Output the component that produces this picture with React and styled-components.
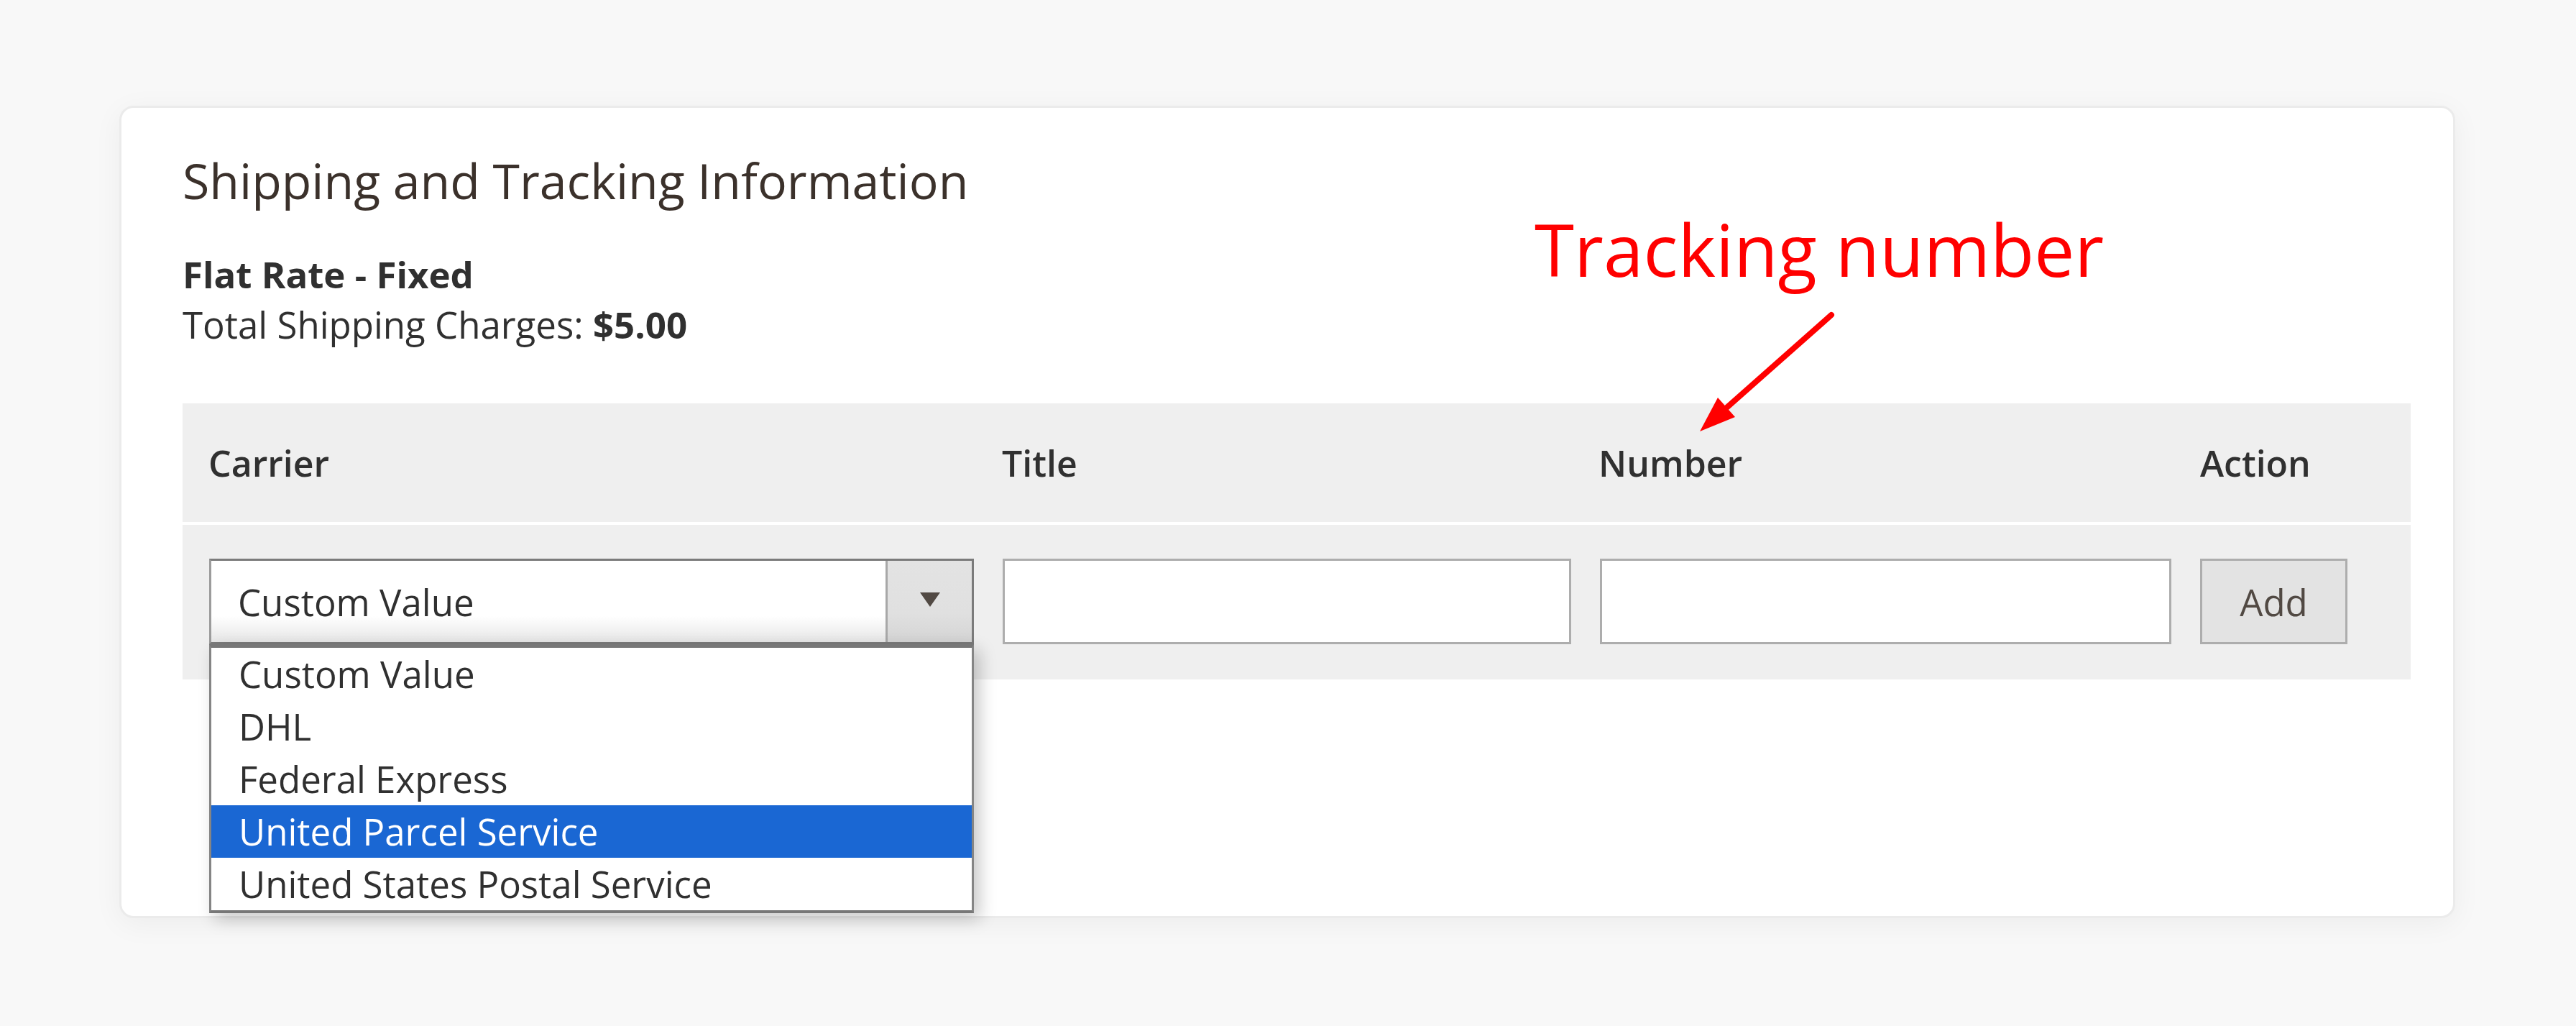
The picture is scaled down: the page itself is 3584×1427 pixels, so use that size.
import React from 'react'
import styled, { createGlobalStyle } from 'styled-components'

const GlobalStyle = createGlobalStyle`
  html, body {
    margin: 0;
    background: #f8f8f8;
    font-family: "Open Sans", "Liberation Sans", sans-serif;
  }
`

const Page = styled.div`
  box-sizing: border-box;
  min-height: 100vh;
  padding: 147px 168px 0 166px;
`

const Card = styled.section`
  position: relative;
  background: #fff;
  border: 3px solid #ebebeb;
  border-radius: 20px;
  box-shadow: 0 8px 40px rgba(0, 0, 0, 0.05);
  padding: 60px 59px 329px 85px;
`

const Title = styled.h2`
  margin: 0 0 54px;
  font-size: 68px;
  line-height: 82px;
  font-weight: 400;
  color: #3b312b;
`

const Info = styled.div`
  font-size: 51px;
  line-height: 70px;
  color: #303030;

  strong {
    font-weight: 700;
  }
`

const Table = styled.div`
  margin-top: 75px;
`

const Row = styled.div`
  display: grid;
  grid-template-columns: 1064px 791px 795px 1fr;
  column-gap: 40px;
  background: #efefef;
  padding-left: 37px;
`

const HeadRow = styled(Row)`
  height: 165px;
  align-items: center;
  border-bottom: 4px solid #fff;
`

const BodyRow = styled(Row)`
  align-items: start;
  padding-top: 47px;
  padding-bottom: 49px;
`

const HeadCell = styled.div`
  font-size: 50px;
  font-weight: 600;
  color: #303030;
  margin-left: ${(p) => p.$shift || 0}px;
`

const Select = styled.div`
  position: relative;
  display: flex;
  box-sizing: border-box;
  height: 119px;
  border: 3px solid #7b7b7b;
  border-left-color: #9c9c9c;
`

const SelectValue = styled.div`
  flex: 1;
  display: flex;
  align-items: center;
  padding-left: 37px;
  font-size: 51px;
  color: #303030;
  background: linear-gradient(to bottom, #fff 68%, #e6e6e6 100%);
`

const SelectButton = styled.div`
  box-sizing: border-box;
  width: 120px;
  display: flex;
  align-items: center;
  justify-content: center;
  border-left: 3px solid #a8a8a8;
  background: linear-gradient(to bottom, #e3e3e3 0%, #e0e0e0 65%, #d4d4d4 100%);
`

const Caret = styled.span`
  width: 0;
  height: 0;
  margin-top: -6px;
  border-left: 14px solid transparent;
  border-right: 14px solid transparent;
  border-top: 20px solid #514943;
`

const DropList = styled.ul`
  position: absolute;
  z-index: 2;
  top: calc(100% + 3px);
  left: -3px;
  right: -3px;
  margin: 0;
  padding: 0;
  list-style: none;
  background: #fff;
  border: 3px solid #858585;
  border-top: 5px solid #777;
  border-bottom: 4px solid #777;
  box-shadow: 8px 8px 22px rgba(0, 0, 0, 0.22);
`

const Option = styled.li`
  height: 73px;
  line-height: 73px;
  padding-left: 38px;
  font-size: 51px;
  color: ${(p) => (p.$active ? '#fff' : '#303030')};
  background: ${(p) => (p.$active ? '#1a67d3' : 'transparent')};
  white-space: nowrap;
`

const TextInput = styled.input`
  display: block;
  box-sizing: border-box;
  width: 100%;
  height: 119px;
  margin: 0;
  border: 3px solid #adadad;
  background: #fff;
  font-family: inherit;
  font-size: 51px;
  outline: none;
`

const AddButton = styled.button`
  box-sizing: border-box;
  width: 205px;
  height: 119px;
  border: 3px solid #adadad;
  background: #e3e3e3;
  font-family: inherit;
  font-size: 51px;
  color: #514943;
  padding: 0;
`

const Note = styled.div`
  position: absolute;
  left: 1966px;
  top: 146px;
  font-size: 100px;
  line-height: 1;
  color: #ff0000;
  white-space: nowrap;
`

const Arrow = styled.svg`
  position: absolute;
  left: 2171px;
  top: 270px;
  overflow: visible;
`

const carriers = [
  'Custom Value',
  'DHL',
  'Federal Express',
  'United Parcel Service',
  'United States Postal Service',
]

export default function App() {
  return (
    <Page>
      <GlobalStyle />
      <Card>
        <Title>Shipping and Tracking Information</Title>
        <Info>
          <strong>Flat Rate - Fixed</strong>
          <div>
            Total Shipping Charges: <strong>$5.00</strong>
          </div>
        </Info>

        <Table>
          <HeadRow>
            <HeadCell $shift={-1}>Carrier</HeadCell>
            <HeadCell $shift={-1}>Title</HeadCell>
            <HeadCell $shift={-2}>Number</HeadCell>
            <HeadCell>Action</HeadCell>
          </HeadRow>
          <BodyRow>
            <Select>
              <SelectValue>Custom Value</SelectValue>
              <SelectButton>
                <Caret />
              </SelectButton>
              <DropList>
                {carriers.map((c) => (
                  <Option key={c} $active={c === 'United Parcel Service'}>
                    {c}
                  </Option>
                ))}
              </DropList>
            </Select>
            <TextInput type="text" />
            <TextInput type="text" />
            <AddButton>Add</AddButton>
          </BodyRow>
        </Table>

        <Note>Tracking number</Note>
        <Arrow width="240" height="200" viewBox="0 0 240 200">
          <line x1="208" y1="18" x2="60" y2="149" stroke="#ff0000" strokeWidth="8" strokeLinecap="round" />
          <polygon points="25,180 50,133 74,160" fill="#ff0000" />
        </Arrow>
      </Card>
    </Page>
  )
}
